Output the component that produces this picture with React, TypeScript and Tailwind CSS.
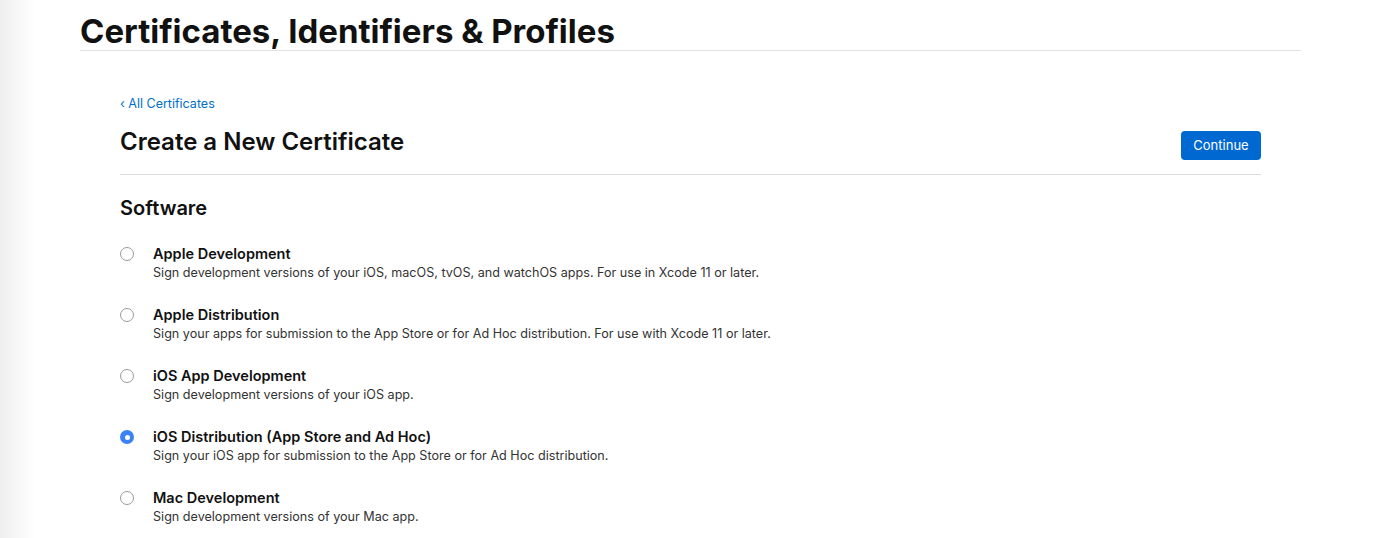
const options = [
  {
    title: 'Apple Development',
    desc: 'Sign development versions of your iOS, macOS, tvOS, and watchOS apps. For use in Xcode 11 or later.',
  },
  {
    title: 'Apple Distribution',
    desc: 'Sign your apps for submission to the App Store or for Ad Hoc distribution. For use with Xcode 11 or later.',
  },
  {
    title: 'iOS App Development',
    desc: 'Sign development versions of your iOS app.',
  },
  {
    title: 'iOS Distribution (App Store and Ad Hoc)',
    desc: 'Sign your iOS app for submission to the App Store or for Ad Hoc distribution.',
    selected: true,
  },
  {
    title: 'Mac Development',
    desc: 'Sign development versions of your Mac app.',
  },
]

function Radio({ checked }: { checked?: boolean }) {
  if (checked) {
    return (
      <span className="flex h-[14px] w-[14px] items-center justify-center rounded-full bg-[#3b82f6]">
        <span className="h-[5px] w-[5px] rounded-full bg-white" />
      </span>
    )
  }
  return <span className="block h-[14px] w-[14px] rounded-full border border-[#9a9a9a] bg-white" />
}

export default function App() {
  return (
    <div
      className="relative min-h-[538px] w-full overflow-hidden bg-white text-[#1d1d1f]"
      style={{ fontFamily: 'Inter, "Noto Sans", sans-serif' }}
    >
      <div className="pointer-events-none absolute inset-y-0 left-0 w-[36px] bg-gradient-to-r from-[#efefef] to-white" />

      <div className="relative ml-[80px] w-[1221px]">
        <header className="border-b border-[#e1e1e1] pt-[12px]">
          <h1 className="text-[33px] font-bold leading-[38px] text-[#111]">
            Certificates, Identifiers &amp; Profiles
          </h1>
        </header>

        <main className="ml-[40px] w-[1141px] pt-[39px]">
          <a href="#" className="text-[12.5px] leading-[18px] text-[#0070c9]">
            ‹ All Certificates
          </a>

          <div className="mt-[14px] flex items-start justify-between border-b border-[#dcdcdc] pb-[14px]">
            <h2 className="text-[24px] font-semibold leading-[28px] text-[#111]">
              Create a New Certificate
            </h2>
            <button className="mt-[3px] h-[29px] w-[80px] rounded-[4px] bg-[#0068d1] text-[13px] text-white">
              Continue
            </button>
          </div>

          <h3 className="mt-[21px] text-[20px] font-semibold leading-[24px] text-[#111]">Software</h3>

          <ul className="mt-[24px] flex flex-col gap-[23px]">
            {options.map((o) => (
              <li key={o.title} className="flex">
                <div className="flex w-[33px] pt-[3px]">
                  <Radio checked={o.selected} />
                </div>
                <div>
                  <div className="text-[14.5px] font-semibold leading-[19px] text-[#111]">{o.title}</div>
                  <div className="text-[12.6px] leading-[19px] text-[#333]">{o.desc}</div>
                </div>
              </li>
            ))}
          </ul>
        </main>
      </div>
    </div>
  )
}
